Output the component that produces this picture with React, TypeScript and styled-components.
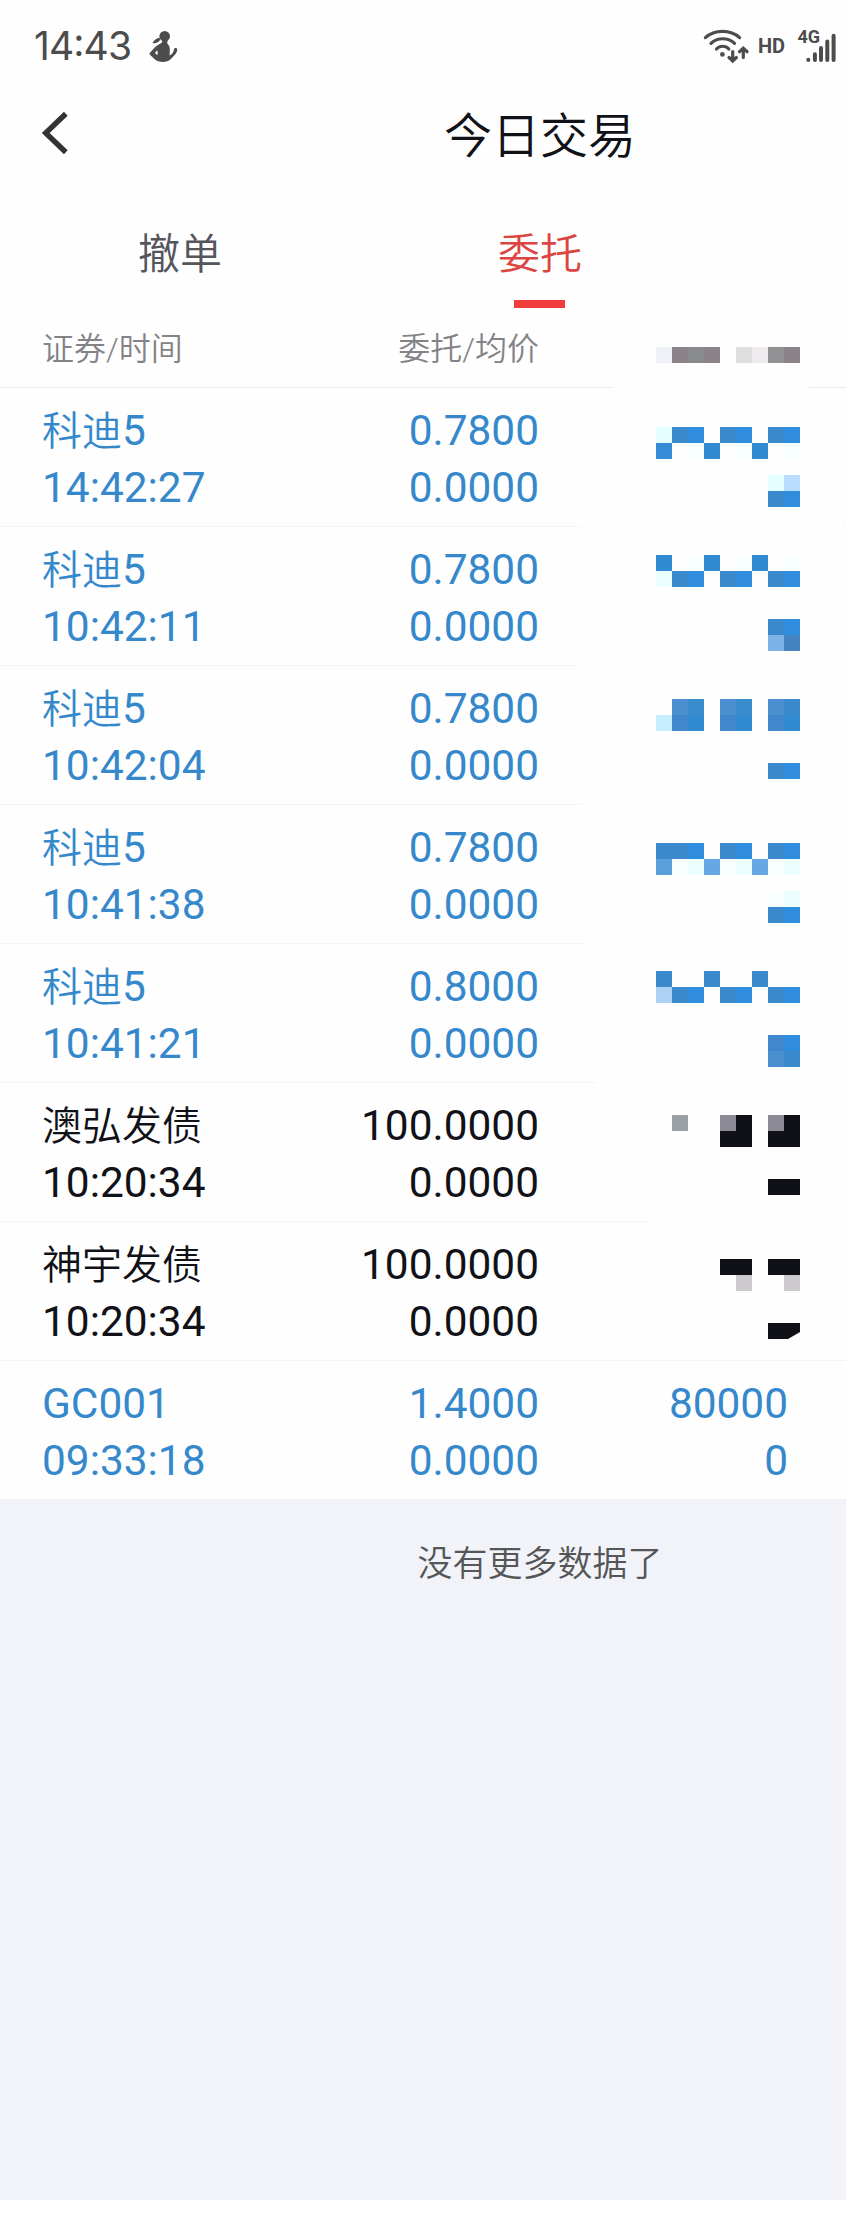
import React from "react";
import styled, { createGlobalStyle } from "styled-components";

const GlobalStyle = createGlobalStyle`
  * { box-sizing: border-box; }
  html, body { margin: 0; padding: 0; background: #fff; overflow: hidden; }
`;

const Page = styled.div`
  width: 846px;
  height: 2230px;
  overflow: hidden;
  display: flex;
  flex-direction: column;
  background: #fff;
  font-family: Roboto, "Noto Sans CJK SC", sans-serif;
`;

const Sheet = styled.main`
  width: 1080px;
  flex: none;
  background: #fefefe;
`;

const StatusBar = styled.div`
  display: flex;
  align-items: center;
  justify-content: space-between;
  width: 846px;
  height: 92px;
  padding: 0 10px 0 34px;
  color: #4c4c4c;
`;

const StatusGroup = styled.div`
  display: flex;
  align-items: center;
`;

const Clock = styled.span`
  width: 114px;
  font: 380 39px/92px Inter, sans-serif;
  font-feature-settings: "case" 1;
  letter-spacing: -0.9px;
`;

const TitleBar = styled.header`
  display: grid;
  grid-template-columns: 100px 880px 100px;
  align-items: start;
  height: 84px;
`;

const BackButton = styled.button`
  display: flex;
  width: 100px;
  height: 82px;
  padding: 0 0 0 40px;
  align-items: center;
  border: 0;
  background: none;
`;

const Title = styled.h1`
  margin: 0;
  text-align: center;
  font-family: "Noto Sans CJK SC", sans-serif;
  font-size: 48px;
  font-weight: 350;
  line-height: 80px;
  color: #111118;
`;

const Tabs = styled.nav`
  display: flex;
  height: 132px;
  padding-top: 32px;
`;

const Tab = styled.div<{ $active?: boolean }>`
  display: flex;
  flex-direction: column;
  align-items: center;
  width: 360px;
  font-family: "Noto Sans CJK SC", sans-serif;
  font-weight: 350;
  font-size: 42px;
  line-height: 86px;
  color: ${(p) => (p.$active ? "#dc4541" : "#55555c")};

  &::after {
    content: "";
    width: 51px;
    height: 8px;
    margin: 6px 1px 0 0;
    background: ${(p) => (p.$active ? "#f03c3a" : "transparent")};
  }
`;

const Columns = styled.div`
  display: grid;
  grid-template-columns: 238px 260px 260px;
  padding-left: 42px;
`;

const HeaderRow = styled(Columns)`
  height: 79px;
  font-size: 32px;
  font-weight: 350;
  line-height: 79px;
  color: #838387;
`;

const OrderRow = styled(Columns)<{ $color: string }>`
  height: 138px;
  color: ${(p) => p.$color};
  font-size: 42.4px;
  line-height: 57px;
`;

const Cell = styled.div<{ $right?: boolean }>`
  padding-top: 14px;
  padding-right: ${(p) => (p.$right ? 1 : 0)}px;
  text-align: ${(p) => (p.$right ? "right" : "left")};
  white-space: nowrap;
`;

const Line = styled.div`
  height: 57px;
`;

const HeadCell = styled(Cell)`
  padding-top: 2px;
`;

const AmountCell = styled(Cell)`
  padding-right: 12px;
`;

const StockName = styled.span`
  font-size: 40px;
  font-weight: 350;
  font-family: "Noto Sans CJK SC", sans-serif;
  line-height: 40px;
`;

const Divider = styled.div<{ $color: string; $stop: number; $resume: number }>`
  display: grid;
  grid-template-columns: ${(p) => p.$stop}px ${(p) => p.$resume - p.$stop}px 1fr;
  height: 1px;

  &::before, &::after {
    content: "";
    background: ${(p) => p.$color};
  }
  &::after { grid-column: 3; }
`;

const MosaicArt = styled.svg<{ $top: number }>`
  display: block;
  margin: ${(p) => p.$top}px 0 0 116px;
`;

const Footer = styled.footer`
  width: 1080px;
  height: 701px;
  flex: none;
  padding-top: 32px;
  background: #f2f3f8;
  text-align: center;
  font-family: "Noto Sans CJK SC", sans-serif;
  font-weight: 350;
  font-size: 35px;
  line-height: 60px;
  color: #55565a;
`;

const palette: Record<string, string> = {
  a: "#3b89cd", b: "#308ddd", c: "#308bd3", d: "#368ad6", e: "#e4ffff",
  f: "#f7ffff", g: "#ecffff", h: "#b9dcff", i: "#7cb2e6", j: "#4484c2",
  k: "#4a90d0", l: "#398ccc", m: "#c6eeff", n: "#4088ce", o: "#5a9fdc",
  p: "#66a8e6", q: "#aed2f6", r: "#9ba1a5", s: "#8c8a94", t: "#101117",
  u: "#cdcbce", v: "#eef2f8", w: "#8c838a", x: "#8a8b8f", y: "#dedede",
  z: "#f0ebee", A: "#929194",
};

const Mosaic = ({ top, cells, clipped }: { top: number; cells: string[]; clipped?: boolean }) => (
  <MosaicArt $top={top} width="144" height={cells.length * 16} shapeRendering="crispEdges">
    {cells.flatMap((line, y) =>
      line.split("").map((c, x) =>
        palette[c] ? (
          <rect key={`${x}-${y}`} x={x * 16} y={y * 16} width="16" height="16" fill={palette[c]} />
        ) : null
      )
    )}
    {clipped && <path d="M132 80L144 73V80Z" fill="#fefefe" shapeRendering="auto" />}
  </MosaicArt>
);

type Order = {
  name: string; suffix?: string; time: string; price: string; dark?: boolean;
  amount?: string; top?: number; cells?: string[]; clipped?: boolean; stop?: number; resume?: number;
};

const orders: Order[] = [
  { name: "科迪", suffix: "5", time: "14:42:27", price: "0.7800", top: 39, stop: 581, resume: 843,
    cells: ["eab.ab.ab", "d.fc.fc.f", "", ".......eh", ".......ab"] },
  { name: "科迪", suffix: "5", time: "10:42:11", price: "0.7800", top: 28, stop: 577,
    cells: ["c.fc.fc.f", "gab.ab.ab", "", "", ".......ab", ".......ij"] },
  { name: "科迪", suffix: "5", time: "10:42:04", price: "0.7800", top: 33, stop: 582,
    cells: [".kl.kl.ka", "mnc.nc.nc", "", "", ".......ab"] },
  { name: "科迪", suffix: "5", time: "10:41:38", price: "0.7800", top: 38, stop: 585,
    cells: ["aab.ab.ab", "ofgpfgpfg", "", ".......fg", ".......ab"] },
  { name: "科迪", suffix: "5", time: "10:41:21", price: "0.8000", top: 27, stop: 596,
    cells: ["a..a..a..", "qab.ab.ab", "", "", ".......nb", ".......ka"] },
  { name: "澳弘发债", time: "10:20:34", price: "100.0000", dark: true, top: 32, stop: 648,
    cells: [".r..st.st", "....tt.tt", "", "", ".......tt"] },
  { name: "神宇发债", time: "10:20:34", price: "100.0000", dark: true, top: 37, stop: 846, clipped: true,
    cells: ["....tt.tt", ".....u..u", "", "", ".......tt"] },
  { name: "", suffix: "GC001", time: "09:33:18", price: "1.4000", amount: "80000" },
];

const FigureIcon = () => (
  <svg width="30" height="34" viewBox="0 0 30 34" fill="#4c4c4c">
    <ellipse cx="16.700" cy="7.300" rx="5.300" ry="5.400" />
    <path d="M11.500 8.800C8.500 9.200 6 11 4.500 14c3 .8 6-.5 7.800-3.200z" />
    <path fillRule="evenodd" d="M14 10h5.500v2.500c-.5 1-.3 2.200.5 3 1.700 1.500 2 4 1.800 6.500l-.3 4.500c2.500-1 4-3 4.500-6 .3-2 3.400-1.800 3.300.3-.3 3-2.300 5-4.300 7-2.500 3-5 5.200-9.500 5.200-4 0-6.500-.7-9-3l-4.300-4c-.8-.8-.8-1.700 0-2.500 3-3.500 6-7 9.300-8.500 1.500-.7 2.800-1.200 2.800-2.500zM9.200 21.300l-2.300 2.600 2.700 2.400c.3-1.700.1-3.400-.4-5z" />
  </svg>
);

const BackIcon = () => (
  <svg width="30" height="44" viewBox="0 0 30 44" fill="none" stroke="#333" strokeWidth="5.400">
    <path d="M25.800 2.800 5.700 22l20.100 19.200" />
  </svg>
);

const WifiIcon = () => (
  <svg width="46" height="36" viewBox="0 0 46 36" fill="none" stroke="#4c4c4c" strokeWidth="3.200" strokeLinecap="round">
    <path d="M2.400 9.600C11.500 1.200 27.500 1.200 36.600 9.600M8 15.400C14.500 9.200 25 9.200 31.500 15.400M13.500 21C17 17.300 22.500 17.300 25.800 21" />
    <circle cx="19.400" cy="26.400" r="2.300" fill="#4c4c4c" stroke="none" />
    <path d="M29.700 23.500v9M26 29.500 29.700 33l3.700-3.500M40.300 29.500v-8.500M36.600 23.700l3.700-3.500 3.700 3.500" />
  </svg>
);

const HdBadge = styled.span`
  width: 27px;
  margin: 0 0 0 9px;
  font-size: 20px;
  font-weight: 700;
  line-height: 36px;
`;

const SignalBox = styled.span`
  position: relative;
  display: block;
  margin-left: 12px;
  width: 39px;
  height: 36px;
`;

const NetLabel = styled.span`
  position: absolute;
  left: 0.5px;
  top: 0;
  font-size: 18px;
  font-weight: 700;
  line-height: 18px;
`;

const SignalIcon = () => (
  <svg width="39" height="36" viewBox="0 0 39 36" stroke="#4c4c4c" strokeWidth="4" strokeLinecap="round">
    <path d="M11.300 31.800v.2M17.900 26.300v5.700M24 20v12M30.300 13.400v18.600M36.600 7.700v24.300" />
  </svg>
);

export default function App() {
  return (
    <Page>
      <GlobalStyle />
      <Sheet>
        <StatusBar>
          <StatusGroup>
            <Clock>14:43</Clock>
            <FigureIcon />
          </StatusGroup>
          <StatusGroup>
            <WifiIcon />
            <HdBadge>HD</HdBadge>
            <SignalBox>
              <SignalIcon />
              <NetLabel>4G</NetLabel>
            </SignalBox>
          </StatusGroup>
        </StatusBar>
        <TitleBar>
          <BackButton aria-label="返回"><BackIcon /></BackButton>
          <Title>今日交易</Title>
        </TitleBar>
        <Tabs>
          <Tab>撤单</Tab>
          <Tab $active>委托</Tab>
        </Tabs>
        <HeaderRow>
          <HeadCell>证券/时间</HeadCell>
          <HeadCell $right>委托/均价</HeadCell>
          <Mosaic top={39} cells={["vwxw.yzAw"]} />
        </HeaderRow>
        <Divider $color="#ebebeb" $stop={613} $resume={809} />
        {orders.map((o, i) => (
          <React.Fragment key={i}>
            <OrderRow $color={o.dark ? "#111118" : "#3588cb"}>
              <Cell>
                <Line><StockName>{o.name}</StockName>{o.suffix}</Line>
                <Line>{o.time}</Line>
              </Cell>
              <Cell $right>
                <Line>{o.price}</Line>
                <Line>0.0000</Line>
              </Cell>
              {o.amount ? (
                <AmountCell $right>
                  <Line>{o.amount}</Line>
                  <Line>0</Line>
                </AmountCell>
              ) : (
                <Mosaic top={o.top!} cells={o.cells!} clipped={o.clipped} />
              )}
            </OrderRow>
            {o.stop && <Divider $color="#f3f4f4" $stop={o.stop} $resume={o.resume ?? 846} />}
          </React.Fragment>
        ))}
      </Sheet>
      <Footer>没有更多数据了</Footer>
    </Page>
  );
}
